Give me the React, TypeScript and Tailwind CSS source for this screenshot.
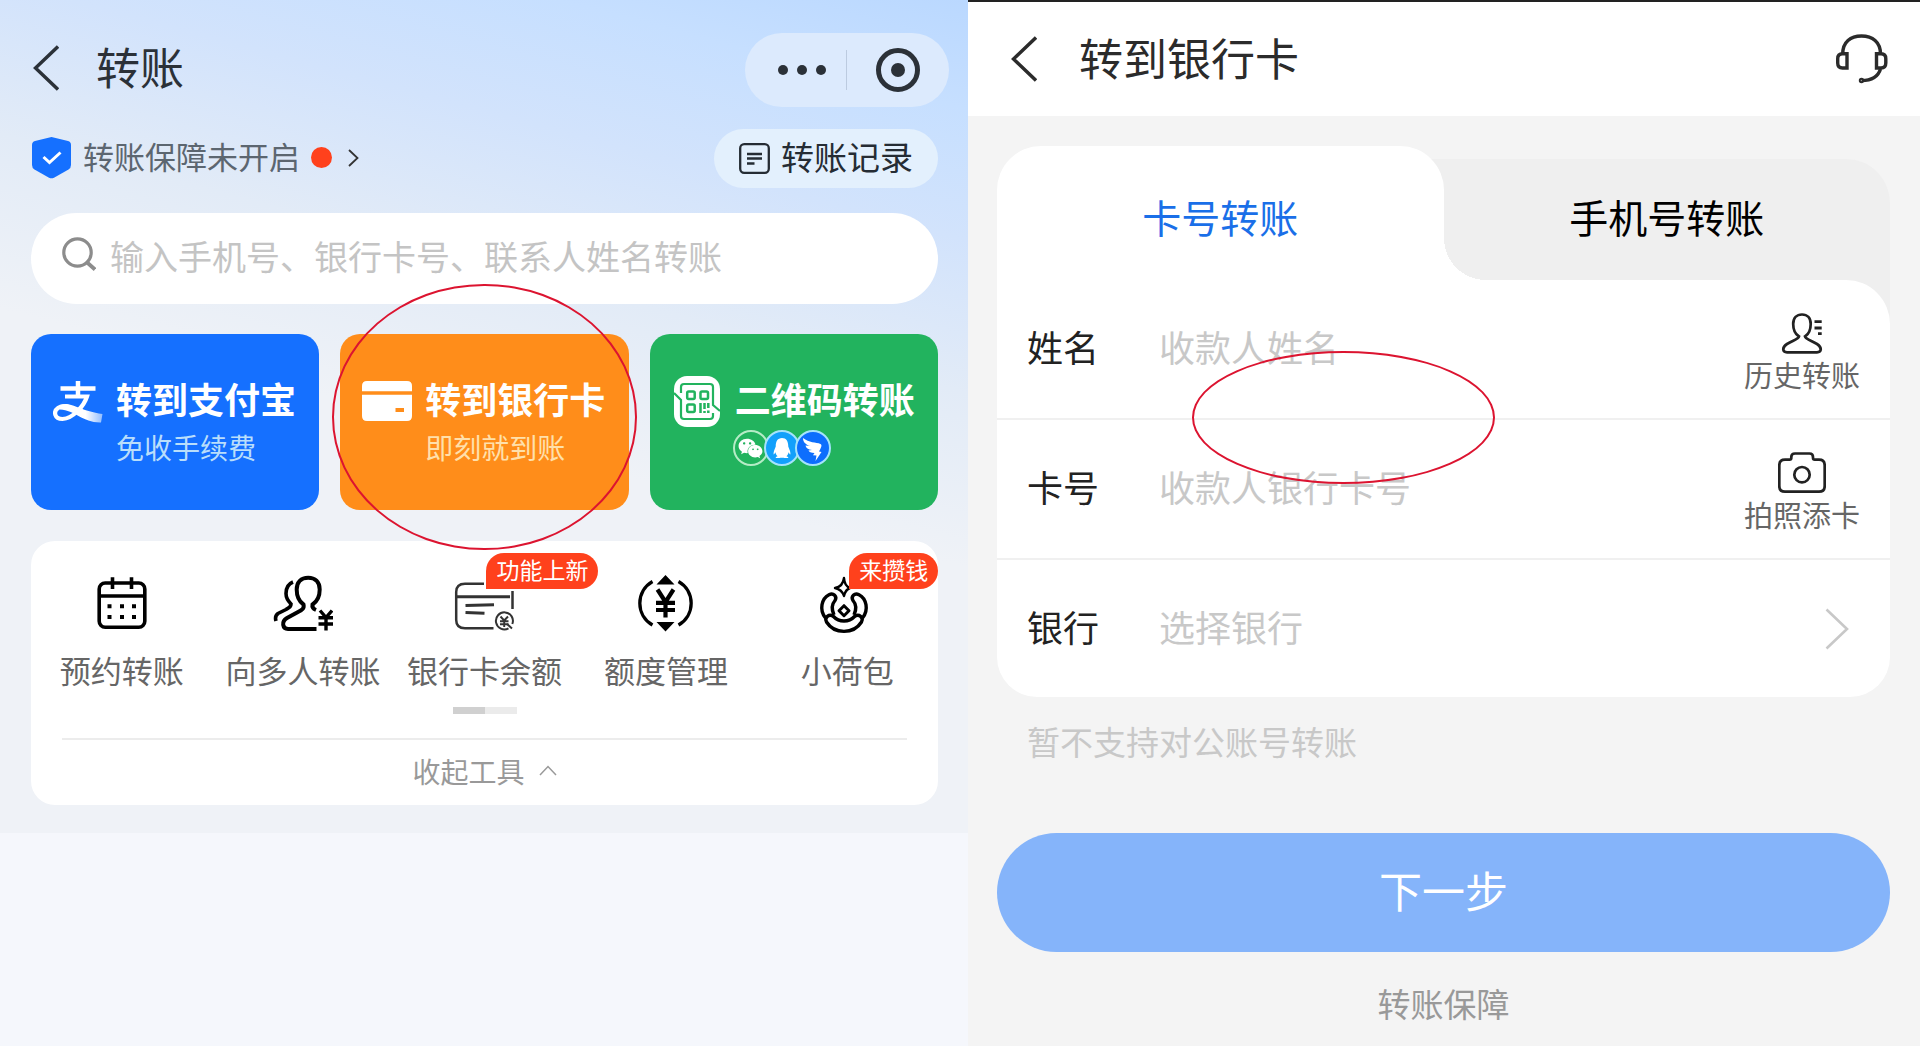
import React, { useState } from "react";
import { FaQq, FaWeixin } from "react-icons/fa";

interface TransferCard {
  title: string;
  subtitle?: string;
  color: string;
  icon: React.ReactNode;
}

interface Tool {
  label: string;
  badge?: string;
  icon: React.ReactNode;
}

function BackIcon() {
  return (
    <svg width="26" height="46" viewBox="0 0 26 46" fill="none" stroke="currentColor" strokeWidth="3.400">
      <path d="M25 1.5 2.5 23 25 44.5" />
    </svg>
  );
}

function ShieldIcon() {
  return (
    <svg width="39" height="42" viewBox="0 0 39 42">
      <path
        d="M19.5 0 36 4Q39 4.800 39 8V28Q39 31 36.500 32.500L22 40.700Q19.500 42 17 40.700L2.500 32.500Q0 31 0 28V8Q0 4.800 3 4Z"
        fill="#1570ff"
      />
      <path d="M11.500 20 17.500 25.500 28.500 15.500" fill="none" stroke="#fff" strokeWidth="3" />
    </svg>
  );
}

function SearchIcon() {
  return (
    <svg width="34" height="44" viewBox="0 0 34 44" fill="none" stroke="#8c8c8c" strokeWidth="3.2">
      <circle cx="15.500" cy="15.500" r="13.700" />
      <path d="M24 24.500 33 32.500" strokeWidth="3.800" />
    </svg>
  );
}

function RecordIcon() {
  return (
    <svg width="31" height="31" viewBox="0 0 31 31" fill="none" stroke="currentColor" strokeWidth="2.300">
      <rect x="1.200" y="1.200" width="28.600" height="28.600" rx="4" />
      <path d="M8 11H23M8 15.500H23M8 20.500H15.500" />
    </svg>
  );
}

function AlipayIcon() {
  return (
    <svg width="50" height="50" viewBox="0 0 50 50" fill="none">
      <defs>
        <linearGradient id="ribbon" x1="0" y1="0" x2="50" y2="0" gradientUnits="userSpaceOnUse">
          <stop offset="0" stopColor="#fff" />
          <stop offset="0.650" stopColor="#fff" />
          <stop offset="1" stopColor="#8fbcff" />
        </linearGradient>
      </defs>
      <path d="M7.500 12.500H42.500M25 5V20" stroke="#fff" strokeWidth="4.500" />
      <path d="M12 20.500H34C31 30 20 42.500 9.500 43C1.500 43 0 35.500 5 32C9 29 14 30.500 19 32" stroke="#fff" strokeWidth="4.200" />
      <path d="M7 29C18 25 26 35 49.500 38L48 46.500C30 47 22 34 7 33.500Z" fill="url(#ribbon)" />
    </svg>
  );
}

function BankCardIcon() {
  return (
    <svg width="50" height="50" viewBox="0 0 50 50" fill="#fff">
      <path d="M0 15.300V10Q0 5 5 5H45Q50 5 50 10V15.300Z" />
      <path d="M0 18.700H50V40Q50 45 45 45H5Q0 45 0 40ZM33.500 32V36H42V32Z" fillRule="evenodd" />
    </svg>
  );
}

function QrIcon() {
  return (
    <svg width="50" height="51" viewBox="0 0 50 51" fill="none" stroke="#22b35e" strokeWidth="2.200">
      <rect x="2" y="0" width="46" height="51" rx="13" fill="#fff" stroke="none" />
      <path d="M9 17V11Q9 8 12 8H38Q41 8 41 11V29L48 35" />
      <path d="M41 37V40Q41 43 38 43H12Q9 43 9 40V24L2 17" />
      <g strokeWidth="2.500">
        <rect x="15.200" y="15.500" width="7.500" height="7.500" rx="1.500" />
        <rect x="28.500" y="15.500" width="7.500" height="7.500" rx="1.500" />
        <rect x="15.200" y="28.500" width="7.500" height="7.500" rx="1.500" />
        <path d="M28.500 27V37M32.500 27V33M32.500 35V37M36.300 27V32M36.300 34.500V37" />
      </g>
    </svg>
  );
}

function CalendarIcon() {
  return (
    <svg width="60" height="60" viewBox="0 0 60 60" fill="none" stroke="#000" strokeWidth="3.600">
      <rect x="7.200" y="9" width="45.600" height="44.300" rx="6" />
      <path d="M7 22H53M20.500 3.300V15M39.500 3.300V15" />
      <path d="M15.500 32.300H19.500M28 32.300H32M40 32.300H44M15.500 43H19.500M28 43H32M40 43H44" strokeWidth="4" />
    </svg>
  );
}

function PeopleIcon() {
  return (
    <svg width="60" height="60" viewBox="0 0 60 60" fill="none" stroke="#000" strokeWidth="4">
      <path d="M43 36C40.500 35 39 33 39.500 30.500C45 27 46.700 22 46.700 15.500C46.700 8 42 3.700 35.200 3.700C28 3.700 23.700 8 23.700 15.500C23.700 22 25.500 27 30.500 30.500C31.500 34.500 29 36 25 38L14 44C8 47.500 9.500 55 15 55H43.500" />
      <path d="M20 8C15 10 13 14 13 19.500C13 25 15.500 27.500 18 30C18 33 16.500 33.500 13 35.500L5 39.500Q1.500 42 3 47" strokeWidth="3.600" />
      <path d="M47 36.500 53 43.500 59 36.500M53 43.500V56.500M45.500 43.700H60M45.500 50H60" strokeWidth="3.400" />
    </svg>
  );
}

function BalanceIcon() {
  return (
    <svg width="60" height="60" viewBox="0 0 60 60" fill="none" stroke="#333" strokeWidth="2.500">
      <path d="M30 9.700H11Q2.200 9.700 2.200 18V46Q2.200 54.300 11 54.300H39.500M58.500 17V35" />
      <path d="M2 22.700H56" strokeWidth="3" />
      <path d="M11.500 31.500 40 30.700M11.500 38.500 30.500 39.200" strokeWidth="3" />
      <path d="M54.500 54.300A8.500 8.500 0 1 1 58.300 50" strokeWidth="2" />
      <path d="M46.500 42.500 50.200 46.500 54 42.500M50.200 46.500V53M46 47.200H54.500M46 50.200H54.500" strokeWidth="1.900" />
      <path d="M53 50 58 54.500" strokeWidth="2" />
    </svg>
  );
}

function QuotaIcon() {
  return (
    <svg width="60" height="60" viewBox="0 0 60 60" fill="none" stroke="#000" strokeWidth="3.300">
      <path d="M16.500 7.500A25 25 0 0 0 16.500 51M42.500 7.500A25 25 0 0 1 42.500 51" />
      <path d="M29.500 1 38.500 10.500H20.500ZM29.500 57.500 38.500 48H20.500Z" fill="#000" stroke="none" />
      <path d="M21.500 15.500 29.500 28 37.500 15.500M29.500 27V43.500M20 28.800H39M20 36H39" strokeWidth="4.200" />
    </svg>
  );
}

function LotusIcon() {
  return (
    <svg width="60" height="60" viewBox="0 0 60 60" fill="none" stroke="#000" strokeWidth="3.400" strokeLinejoin="round">
      <path d="M8.500 44C2 36 4.500 24.500 12 20.700C16.500 18.500 20.500 22.500 18 26.500C14.500 30.500 14.500 35.500 17 41" />
      <path d="M45.500 44C52 36 49.500 24.500 42 20.700C37.500 18.500 33.500 22.500 36 26.500C39.500 30.500 39.500 35.500 37 41" />
      <path d="M16.500 42.500C12 39.500 7 43.500 9.500 48C17.500 60.500 36.500 60.500 44.500 48C47 43.500 42 39.500 37.500 42.500C32 48.500 22 48.500 16.500 42.500Z" />
      <path d="M27 31.700 32 36.700 27 41.700 22 36.700Z" strokeWidth="3" />
      <path d="M27 4Q26 12.500 18 14Q25 15.500 27 22Q28.500 15.500 33 14Q27.500 12 27 4Z" strokeWidth="2.400" />
    </svg>
  );
}

function HeadsetIcon() {
  return (
    <svg width="52" height="50" viewBox="0 0 52 50" fill="none" stroke="currentColor" strokeWidth="3.400">
      <path d="M6.700 20C6.700 8 14.500 2 25.500 2S44.500 8 44.500 20" />
      <path d="M11 19.800V34H6.500Q1.700 34 1.700 29V24.800Q1.700 19.800 6.500 19.800Z" />
      <path d="M40.500 19.800V34H45Q49.800 34 49.800 29V24.800Q49.800 19.800 45 19.800Z" />
      <path d="M44.500 35Q41 46.500 25.500 46.500" />
      <circle cx="25.500" cy="46.500" r="1" />
    </svg>
  );
}

function HistoryIcon() {
  return (
    <svg width="48" height="42" viewBox="0 0 48 42" fill="none" stroke="#222" strokeWidth="2.700">
      <path d="M21 24.500C17 22 15.200 18 15.200 12C15.200 6 18.700 2.500 24 2.500C29.300 2.500 32.700 6 32.700 12C32.700 18 31 22 27 24.500C27.500 27 32 28 39 32C44.500 35.500 43.500 40.300 39 40.300H9C4.500 40.300 3.500 35.500 9 32C16 28 20.500 27 21 24.500Z" />
      <path d="M36.500 9.700H43.700M36.500 16H43.700M40 21.700H43.700" strokeWidth="2.800" />
    </svg>
  );
}

function CameraIcon() {
  return (
    <svg width="48" height="42" viewBox="0 0 48 42" fill="none" stroke="#222" strokeWidth="2.700">
      <path d="M7 7.700H11.500Q13.300 7.700 13.300 6V5Q13.300 1.500 17 1.500H31.500Q35 1.500 35 5V6Q35 7.700 36.800 7.700H41Q46.700 7.700 46.700 13.500V34Q46.700 39.700 41 39.700H7Q1.300 39.700 1.300 34V13.500Q1.300 7.700 7 7.700Z" />
      <circle cx="24" cy="22.700" r="7.700" />
    </svg>
  );
}

function AppLogos() {
  return (
    <div className="-ml-0.5 flex h-11 items-center text-white">
      <span className="grid size-9 place-items-center rounded-full border-2 border-[#b5ecc6]">
        <FaWeixin size={25} />
      </span>
      <span className="-ml-[5px] grid size-9 place-items-center rounded-full border-2 border-[#a5e3fb] bg-[#12a0fb]">
        <FaQq size={20} />
      </span>
      <span className="-ml-[5px] grid size-9 place-items-center rounded-full border-2 border-[#a5e3fb] bg-[#0d6efd]">
        <svg width="32" height="32" viewBox="0 0 32 32" fill="currentColor">
          <path d="M6 6C12 11 19 10 23.500 12C25.500 13 24 16 22 19.500L24.500 20 18.500 29 19.500 23.500 16 23.300 17.500 21C14 21 12 20 11.500 18.500L15 18C11 17.500 9 16 8.500 13.500L13 14C8.500 12.500 6 10 6 6Z" />
        </svg>
      </span>
    </div>
  );
}

const CARDS: TransferCard[] = [
  { title: "转到支付宝", subtitle: "免收手续费", color: "bg-[#1570ff] text-[#b9defb]", icon: <AlipayIcon /> },
  { title: "转到银行卡", subtitle: "即刻就到账", color: "bg-[#ff8d1a] text-[#ffe0ab]", icon: <BankCardIcon /> },
  { title: "二维码转账", color: "bg-[#22b35e] text-white", icon: <QrIcon /> },
];

const TOOLS: Tool[] = [
  { label: "预约转账", icon: <CalendarIcon /> },
  { label: "向多人转账", icon: <PeopleIcon /> },
  { label: "银行卡余额", icon: <BalanceIcon />, badge: "功能上新" },
  { label: "额度管理", icon: <QuotaIcon /> },
  { label: "小荷包", icon: <LotusIcon />, badge: "来攒钱" },
];

function TransferHome() {
  return (
    <section className="bg-[#f5f7fc]">
      <div className="bg-[linear-gradient(195deg,#bad8ff_0%,#c6dfff_10%,#d2e3fc_22%,#e2ebf7_36%,#eff2f7_52%)] pt-[33px] pb-7 pl-[31px] pr-[30px]">
        <header className="-mr-[11px] flex h-[74px] items-center text-[#2b3138]">
          <button className="pb-1 pl-0.5" aria-label="返回">
            <BackIcon />
          </button>
          <h1 className="ml-[37px] pb-2 text-[44px] leading-[52px]">转账</h1>
          <div className="ml-auto flex h-full w-[204px] items-center rounded-full bg-[#dceafd]">
            <button className="flex w-[101px] justify-center gap-[9px] pl-3" aria-label="更多">
              <span className="size-[10px] rounded-full bg-current" />
              <span className="size-[10px] rounded-full bg-current" />
              <span className="size-[10px] rounded-full bg-current" />
            </button>
            <span className="h-10 w-px bg-[#bccbe0]" />
            <button className="flex flex-1 justify-center" aria-label="关闭">
              <span className="grid size-11 place-items-center rounded-full border-5 border-current">
                <span className="size-[14px] rounded-full bg-current" />
              </span>
            </button>
          </div>
        </header>

        <div className="mt-[22px] flex items-center">
          <button className="flex items-center pb-0.5 pl-px text-[31px] leading-[38px] text-[#5c6670]">
            <ShieldIcon />
            <span className="ml-3 pb-1">转账保障未开启</span>
            <span className="ml-[11px] size-[21px] rounded-full bg-[#ff411c]" />
            <svg className="ml-4" width="11" height="18" viewBox="0 0 11 18" fill="none" stroke="#333" strokeWidth="1.800">
              <path d="M1 1 9.500 9 1 17" />
            </svg>
          </button>
          <button className="ml-auto flex h-[59px] items-center gap-[11px] rounded-full bg-[#e3f0fd] px-[25px] text-[33px] leading-[44px] text-[#252c34]">
            <RecordIcon />
            <span className="pb-1.5">转账记录</span>
          </button>
        </div>

        <label className="mt-[25px] flex h-[91px] items-center gap-[14px] rounded-full bg-white px-[31px]">
          <SearchIcon />
          <input
            type="search"
            aria-label="搜索收款人"
            placeholder="输入手机号、银行卡号、联系人姓名转账"
            className="min-w-0 flex-1 pb-1.5 text-[34px] leading-[44px] outline-none placeholder:text-[#c4c4c4]"
          />
        </label>

        <div className="mt-[30px] grid grid-cols-3 gap-[21px]">
          {CARDS.map((card, index) => (
            <div key={card.title} className="relative">
              <button className={`flex h-44 w-full items-start gap-[13px] rounded-[20px] pt-[42px] pl-[22px] text-left ${card.color}`}>
                {card.icon}
                <span className="whitespace-nowrap">
                  <span className="block pb-1.5 text-[36px] font-bold leading-[44px] text-white">{card.title}</span>
                  {card.subtitle ? (
                    <span className="block text-[28px] leading-[42px]">{card.subtitle}</span>
                  ) : (
                    <AppLogos />
                  )}
                </span>
              </button>
              {/* Marker ring around the bank card entry */}
              {index === 1 && (
                <span className="pointer-events-none absolute -top-[50px] -right-2 -bottom-10 -left-2 z-10 rounded-[50%] border-2 border-[#dc1430]" />
              )}
            </div>
          ))}
        </div>

        <div className="mt-[31px] rounded-3xl bg-white">
          <div className="grid grid-cols-5">
            {TOOLS.map((tool) => (
              <button key={tool.label} className="relative flex flex-col items-center pt-[33px]">
                {tool.icon}
                <span className="mt-[14px] whitespace-nowrap text-[31px] leading-[44px] text-[#666]">{tool.label}</span>
                {tool.badge && (
                  <span className="absolute top-3 left-1/2 ml-0.5 h-9 whitespace-nowrap rounded-[18px] rounded-bl-none bg-[#ff411c] px-[10px] text-[23px] leading-[32px] text-white">
                    {tool.badge}
                  </span>
                )}
              </button>
            ))}
          </div>
          <div className="mx-auto mt-[15px] h-[7px] w-16 bg-[#ebebeb]">
            <div className="h-full w-1/2 bg-[#d0d0d0]" />
          </div>
          <div className="mx-[31px] mt-6 h-0.5 bg-[#ececec]" />
          <button className="flex h-[65px] w-full items-center justify-center gap-[14px] pb-1 text-[28px] leading-[44px] text-[#999]">
            收起工具
            <svg width="18" height="11" viewBox="0 0 18 11" fill="none" stroke="currentColor" strokeWidth="1.500">
              <path d="M1 10 9 1.500 17 10" />
            </svg>
          </button>
        </div>
      </div>
    </section>
  );
}

interface FieldProps {
  id: string;
  label: string;
  placeholder: string;
  action: string;
  icon: React.ReactNode;
}

function Field({ id, label, placeholder, action, icon }: FieldProps) {
  return (
    <div className="flex h-[140px] items-center border-b-2 border-[#f0f0f0] px-[30px]">
      <label htmlFor={id} className="w-[132px] pb-1.5 text-[36px] leading-[44px] text-[#222]">
        {label}
      </label>
      <input
        id={id}
        placeholder={placeholder}
        className="min-w-0 flex-1 pb-1.5 text-[36px] leading-[44px] outline-none placeholder:text-[#c8c8c8]"
      />
      <button className="flex flex-col items-center pt-2 text-[29px] leading-10 text-[#666]">
        {icon}
        {action}
      </button>
    </div>
  );
}

function BankTransfer() {
  const [tab, setTab] = useState("card");

  return (
    <section className="border-t-2 border-[#222] bg-[#f4f4f4]">
      <header className="flex h-[114px] items-center bg-white pr-8 pl-[43px] text-[#2b2b2b]">
        <button aria-label="返回">
          <BackIcon />
        </button>
        <h1 className="ml-[42px] pb-1 text-[44px] leading-[52px]">转到银行卡</h1>
        <button className="ml-auto" aria-label="客服">
          <HeadsetIcon />
        </button>
      </header>

      <div className="mt-[30px] pr-[30px] pl-[29px]">
        <div className="relative">
          {/* Grey backing that shows behind the rounded corners */}
          <div className="absolute top-[13px] right-0 h-[180px] w-3/5 rounded-tr-[44px] bg-[#efefef]" />
          <div className="relative grid grid-cols-2 text-[39px] leading-[50px]" role="tablist">
            <button
              role="tab"
              aria-selected={tab === "card"}
              onClick={() => setTab("card")}
              className="h-[134px] rounded-t-[44px] bg-white pt-1.5 text-[#1a6fe8]"
            >
              卡号转账
            </button>
            <button
              role="tab"
              aria-selected={tab === "phone"}
              onClick={() => setTab("phone")}
              className="relative h-[134px] pt-1.5 text-black before:absolute before:bottom-0 before:left-0 before:size-[42px] before:bg-[radial-gradient(circle_at_top_right,transparent_42px,#fff_42px)]"
            >
              手机号转账
            </button>
          </div>

          <form className="relative rounded-b-[40px] rounded-tr-[44px] bg-white">
            <Field id="payee" label="姓名" placeholder="收款人姓名" action="历史转账" icon={<HistoryIcon />} />
            <Field id="card-no" label="卡号" placeholder="收款人银行卡号" action="拍照添卡" icon={<CameraIcon />} />
            <div className="flex h-[137px] items-center pr-[41px] pl-[30px]">
              <label htmlFor="bank" className="w-[132px] pb-1.5 text-[36px] leading-[44px] text-[#222]">
                银行
              </label>
              <select id="bank" className="min-w-0 flex-1 appearance-none pb-1.5 text-[36px] leading-[44px] text-[#c8c8c8] outline-none">
                <option>选择银行</option>
              </select>
              <svg width="24" height="42" viewBox="0 0 24 42" fill="none" stroke="#c8c8c8" strokeWidth="2.600">
                <path d="M1.500 1.500 22 21 1.500 40.500" />
              </svg>
            </div>
            {/* Marker ring over the name and card fields */}
            <span className="pointer-events-none absolute top-[71px] left-[195px] h-[133px] w-[303px] rounded-[50%] border-2 border-[#dc1430]" />
          </form>
        </div>

        <p className="mt-[22px] ml-[30px] text-[33px] leading-[44px] text-[#c8c8c8]">暂不支持对公账号转账</p>
        <button className="mt-[70px] h-[119px] w-full rounded-full bg-[#85b4fa] pb-2 text-[43px] leading-[52px] text-white">
          下一步
        </button>
        <a href="#guarantee" className="mt-[29px] block text-center text-[33px] leading-[44px] text-[#999]">
          转账保障
        </a>
      </div>
    </section>
  );
}

export default function App() {
  return (
    <main className="grid min-h-screen grid-cols-[121fr_119fr] font-['Noto_Sans_CJK_SC',sans-serif]">
      <TransferHome />
      <BankTransfer />
    </main>
  );
}
